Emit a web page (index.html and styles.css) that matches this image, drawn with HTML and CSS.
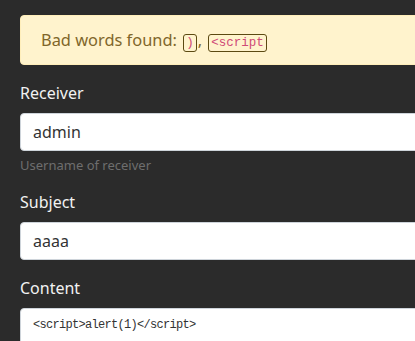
FILE: index.html
```html
<!DOCTYPE html>
<html>
    <head>
        <title>Send message</title>
        <link rel="stylesheet" href="styles.css">
    </head>
<body>
    <div class="container">
        <div class="alert">Bad words found: <code>)</code>, <code>&lt;script</code></div>
        <form>
            <div class="form-group">
                <label for="receiver">Receiver</label>
                <input type="text" id="receiver" class="form-control" value="admin">
                <small class="help">Username of receiver</small>
            </div>
            <div class="form-group">
                <label for="subject">Subject</label>
                <input type="text" id="subject" class="form-control" value="aaaa">
            </div>
            <div class="form-group">
                <label for="content">Content</label>
                <textarea id="content" class="form-control content" rows="6">&lt;script&gt;alert(1)&lt;/script&gt;</textarea>
            </div>
        </form>
    </div>
</body>
</html>
```

FILE: styles.css
```css
html {
    overflow: hidden;
}

body {
    margin: 0;
    background-color: #2b2b2b;
    color: #f2f2f2;
    font-family: "Noto Sans", "Open Sans", sans-serif;
    font-size: 16px;
    line-height: 1.5;
}

.container {
    width: 640px;
    padding: 15px 0 0 20px;
}

.alert {
    background-color: #fff3cd;
    color: #80662a;
    border: 1px solid #ffeeba;
    border-radius: 4px;
    padding: 12px 20px;
    margin-bottom: 16px;
    font-size: 16.4px;
    line-height: 24px;
    height: 24px;
}

.alert code {
    font-family: "Liberation Mono", "DejaVu Sans Mono", monospace;
    font-size: 12.5px;
    line-height: 1;
    color: #cf4a78;
    border: 1px solid #5c4a12;
    border-radius: 3px;
    padding: 1px 2px;
    margin: 0 1px 0 2px;
}

.form-group {
    margin-bottom: 16px;
}

label {
    display: block;
    margin-bottom: 8px;
    font-size: 16px;
    line-height: 24px;
}

.form-control {
    display: block;
    box-sizing: border-box;
    width: 100%;
    height: 38px;
    padding: 6px 12px;
    font-family: inherit;
    font-size: 16px;
    line-height: 24px;
    color: #333;
    background-color: #fff;
    border: 1px solid #ced4da;
    border-radius: 4px;
}

.help {
    display: block;
    margin-top: 6px;
    font-size: 13px;
    line-height: 17px;
    color: #6e6e6e;
}

.content {
    height: 120px;
    padding: 7px 12px;
    font-family: "Liberation Mono", "DejaVu Sans Mono", monospace;
    font-size: 12px;
    letter-spacing: -0.7px;
    line-height: 18px;
    color: #333;
    resize: none;
}
```
